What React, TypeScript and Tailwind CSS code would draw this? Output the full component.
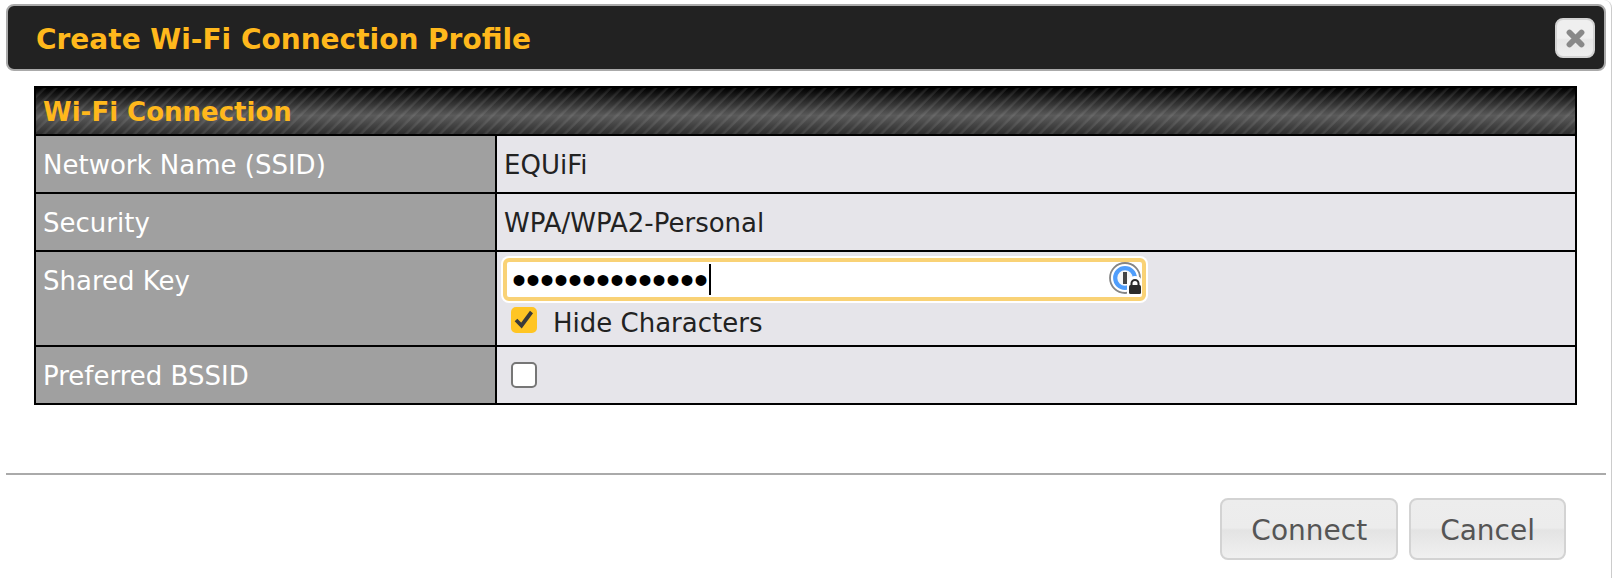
import { useState } from "react";

const thClass =
    "border-2 border-black bg-[#a0a0a0] px-[7px] pt-[13px] pb-[11px] text-left align-top font-normal text-white";
const tdClass =
    "border-2 border-black bg-[#e6e5ea] px-[7px] pt-[13px] pb-[11px] align-top text-[#222]";
const buttonClass =
    "h-[62px] rounded-lg border-2 border-[#d3d3d3] bg-[linear-gradient(#ededed_0%,#ececec_48%,#e3e3e3_52%,#ebebeb_80%,#f0f0f0_100%)] px-[29px] pt-1 text-[28px] text-[#555]";

const VaultIcon = () => (
    <svg className="size-8" viewBox="0 0 32 32" fill="none" aria-hidden="true">
        <circle cx="16" cy="16" r="15" fill="#fff" stroke="#858585" strokeWidth="1.8" />
        <circle cx="16" cy="16" r="9.8" fill="#f6f6f6" stroke="#4f9dfb" strokeWidth="4.2" />
        <rect x="14" y="10" width="4" height="12" fill="#444" />
        <path d="M18 33V22c0-4 3-8 8-8s7 3 7 6v13z" fill="#fff" />
        <path d="M22.5 24v-2.5a3.5 3.5 0 0 1 7 0V24" stroke="#2b2b2b" strokeWidth="2" />
        <rect x="20" y="23" width="12" height="9" rx="1.5" fill="#2b2b2b" />
    </svg>
);

const CloseIcon = () => (
    <svg className="size-5" viewBox="0 0 20 20" fill="none" aria-hidden="true">
        <path d="M4.5 4.5l12 12M16.5 4.5l-12 12" stroke="#888" strokeWidth="5.8" strokeLinecap="round" />
    </svg>
);

const Checkbox = ({
    id,
    label,
    checked,
    onChange,
}: {
    id: string;
    label?: string;
    checked: boolean;
    onChange: (value: boolean) => void;
}) => (
    <span className="grid size-[26px] shrink-0">
        <input
            id={id}
            type="checkbox"
            aria-label={label}
            checked={checked}
            onChange={(e) => onChange(e.target.checked)}
            className="col-start-1 row-start-1 size-[26px] appearance-none rounded-[5px] border-2 border-[#767676] bg-white checked:border-[#ffc524] checked:bg-[#ffc524]"
        />
        {checked && (
            <svg
                className="pointer-events-none col-start-1 row-start-1 size-[26px]"
                viewBox="0 0 26 26"
                fill="none"
                aria-hidden="true"
            >
                <path d="M5 13l5.5 5.5L20.5 5" stroke="#3a3a3a" strokeWidth="3.8" />
            </svg>
        )}
    </span>
);

const App = () => {
    const [sharedKey, setSharedKey] = useState("equifi-network");
    const [hideCharacters, setHideCharacters] = useState(true);
    const [preferBssid, setPreferBssid] = useState(false);

    return (
        <div
            role="dialog"
            aria-labelledby="dialog-title"
            className="min-h-screen rounded-t-lg border-r border-[#ccc] bg-white px-[6px] pt-1 font-['DejaVu_Sans',Verdana,sans-serif] text-[26px] leading-8"
        >
            <header className="mr-[-1px] flex items-center justify-between rounded-lg border-2 border-[#aaa] bg-[#222] pt-3 pr-[9px] pb-[11px] pl-7">
                <h1 id="dialog-title" className="pt-1 text-[28px] font-bold text-[#ffb81c]">
                    Create Wi-Fi Connection Profile
                </h1>
                <button
                    type="button"
                    aria-label="Close"
                    className="flex size-10 items-center justify-center rounded-lg border-2 border-[#d3d3d3] bg-[linear-gradient(#efefef_50%,#e6e6e6_55%,#eee)]"
                >
                    <CloseIcon />
                </button>
            </header>

            <main className="px-7 pt-[15px] pb-[68px]">
                <table className="w-full table-fixed border-collapse">
                    <colgroup>
                        <col className="w-[461px]" />
                        <col />
                    </colgroup>
                    <thead>
                        <tr>
                            <th
                                colSpan={2}
                                className="border-2 border-black bg-[repeating-linear-gradient(135deg,transparent_0px,transparent_4px,#ffffff16_6px,#ffffff16_7px,transparent_8px),linear-gradient(#000,#5a5a5a_60%,#2e2e2e)] px-[7px] pt-2 pb-[6px] text-left text-[#ffb81c]"
                            >
                                Wi-Fi Connection
                            </th>
                        </tr>
                    </thead>
                    <tbody>
                        <tr>
                            <th scope="row" className={thClass}>Network Name (SSID)</th>
                            <td className={tdClass}>EQUiFi</td>
                        </tr>
                        <tr>
                            <th scope="row" className={thClass}>Security</th>
                            <td className={tdClass}>WPA/WPA2-Personal</td>
                        </tr>
                        <tr>
                            <th scope="row" className={thClass}>
                                <label htmlFor="shared-key">Shared Key</label>
                            </th>
                            <td className="border-2 border-black bg-[#e6e5ea] px-1 pt-1 pb-[6px] align-top text-[#222]">
                                <div className="relative w-[647px] rounded-lg bg-white p-[2px]">
                                    <input
                                        id="shared-key"
                                        type={hideCharacters ? "password" : "text"}
                                        value={sharedKey}
                                        onChange={(e) => setSharedKey(e.target.value)}
                                        className={`block h-[43px] w-full rounded-md border-4 border-[#f9d276] bg-white pr-10 pl-[5px] text-black caret-transparent outline-none ${hideCharacters
                                            ? "pt-[2px] font-['Liberation_Sans',Arial,sans-serif] text-[40px]"
                                            : "text-[24px]"
                                        }`}
                                    />
                                    <span className="absolute top-2 left-[208px] h-[31px] w-[2px] bg-black" />
                                    <span className="absolute top-[6px] right-[7px]">
                                        <VaultIcon />
                                    </span>
                                </div>
                                <div className="flex items-start gap-4 px-[10px] pt-1">
                                    <Checkbox
                                        id="hide-characters"
                                        checked={hideCharacters}
                                        onChange={setHideCharacters}
                                    />
                                    <label htmlFor="hide-characters">Hide Characters</label>
                                </div>
                            </td>
                        </tr>
                        <tr>
                            <th scope="row" className={thClass}>Preferred BSSID</th>
                            <td className="border-2 border-black bg-[#e6e5ea] px-[14px] py-[15px] align-top">
                                <Checkbox
                                    id="preferred-bssid"
                                    label="Preferred BSSID"
                                    checked={preferBssid}
                                    onChange={setPreferBssid}
                                />
                            </td>
                        </tr>
                    </tbody>
                </table>
            </main>

            <footer className="mr-[-1px] flex justify-end gap-[11px] border-t-2 border-[#aaa] pt-[23px] pr-10">
                <button type="button" className={buttonClass}>Connect</button>
                <button type="button" className={buttonClass}>Cancel</button>
            </footer>
        </div>
    );
};

export default App;
